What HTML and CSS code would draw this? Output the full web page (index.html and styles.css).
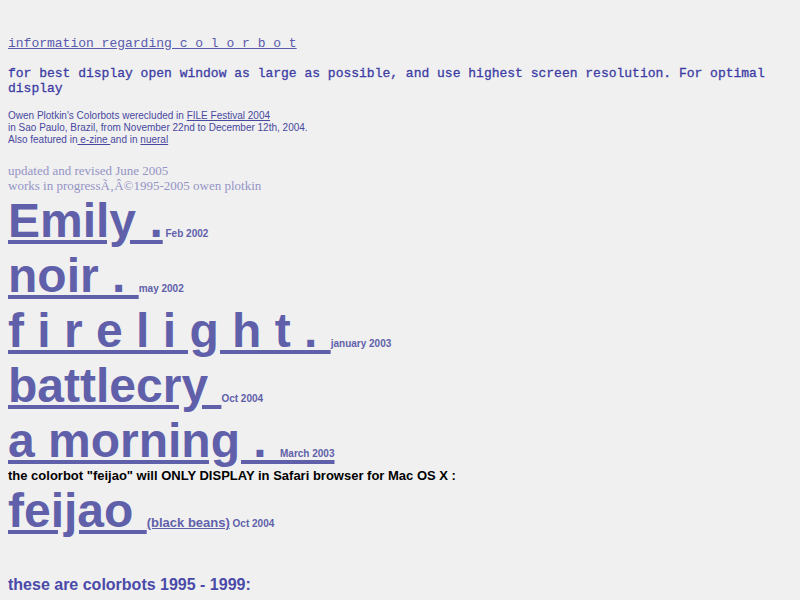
FILE: index.html
```html
<!DOCTYPE html>
<html>
<head>
<meta charset="utf-8">
<title>colorbots</title>
<link rel="stylesheet" href="styles.css">
</head>
<body>
<div class="page">
  <p class="info"><a href="#">information regarding c o l o r b o t</a></p>
  <p class="advice">for best display open window as large as possible, and use highest screen resolution. For optimal display</p>
  <p class="credits">Owen Plotkin's Colorbots werecluded in <a href="#">FILE Festival 2004</a><br>in Sao Paulo, Brazil, from November 22nd to December 12th, 2004.<br>Also featured in<a href="#"> e-zine </a>and in <a href="#">nueral</a></p>
  <p class="updated">updated and revised June 2005<br>works in progressÃ‚Â©1995-2005 owen plotkin</p>
  <div class="bots">
    <div class="bot"><a href="#">Emily .</a><span class="date"> Feb 2002</span></div>
    <div class="bot"><a href="#">noir . </a><span class="date">may 2002</span></div>
    <div class="bot"><a href="#">f i r e l i g h t . </a><span class="date">january 2003</span></div>
    <div class="bot"><a href="#">battlecry </a><span class="date">Oct 2004</span></div>
    <div class="bot"><a href="#">a morning . <span class="date">March 2003</span></a></div>
    <p class="warning">the colorbot "feijao" will ONLY DISPLAY in Safari browser for Mac OS X :</p>
    <div class="bot"><a href="#">feijao </a><a class="beans" href="#">(black beans)</a><span class="date"> Oct 2004</span></div>
  </div>
  <h3 class="older">these are colorbots 1995 - 1999:</h3>
</div>
</body>
</html>
```

FILE: styles.css
```css
html {
  background: #f0f0f0;
}
body {
  margin: 8px;
  background: #f0f0f0;
  font-family: "Liberation Sans", Arial, sans-serif;
}
.page {
  padding-top: 28px;
}
p {
  margin: 0;
}
a {
  color: inherit;
}
.info {
  font-family: "Liberation Mono", "Courier New", monospace;
  font-size: 13px;
  line-height: 15px;
  color: #5a5aae;
}
.advice {
  font-family: "Liberation Mono", "Courier New", monospace;
  font-size: 13px;
  line-height: 15px;
  color: #3c3ca4;
  margin-top: 15px;
  -webkit-text-stroke: 0.3px #3c3ca4;
}
.credits {
  font-size: 10px;
  line-height: 12px;
  color: #4848a0;
  margin-top: 14px;
}
.updated {
  font-family: "Liberation Serif", "Times New Roman", serif;
  font-size: 13px;
  line-height: 15px;
  color: #9494c6;
  margin-top: 17px;
}
.bots {
  color: #6060aa;
}
.bot {
  font-size: 48px;
  font-weight: bold;
  line-height: 55px;
}
.date {
  font-size: 10px;
  font-weight: bold;
  line-height: 1;
}
.beans {
  font-size: 13px;
  font-weight: bold;
  line-height: 1;
}
.warning {
  font-size: 13px;
  line-height: 15px;
  font-weight: bold;
  color: #000;
}
.older {
  font-size: 16px;
  font-weight: bold;
  color: #4a4aa8;
  margin: 38px 0 0;
  line-height: 18px;
}
```
